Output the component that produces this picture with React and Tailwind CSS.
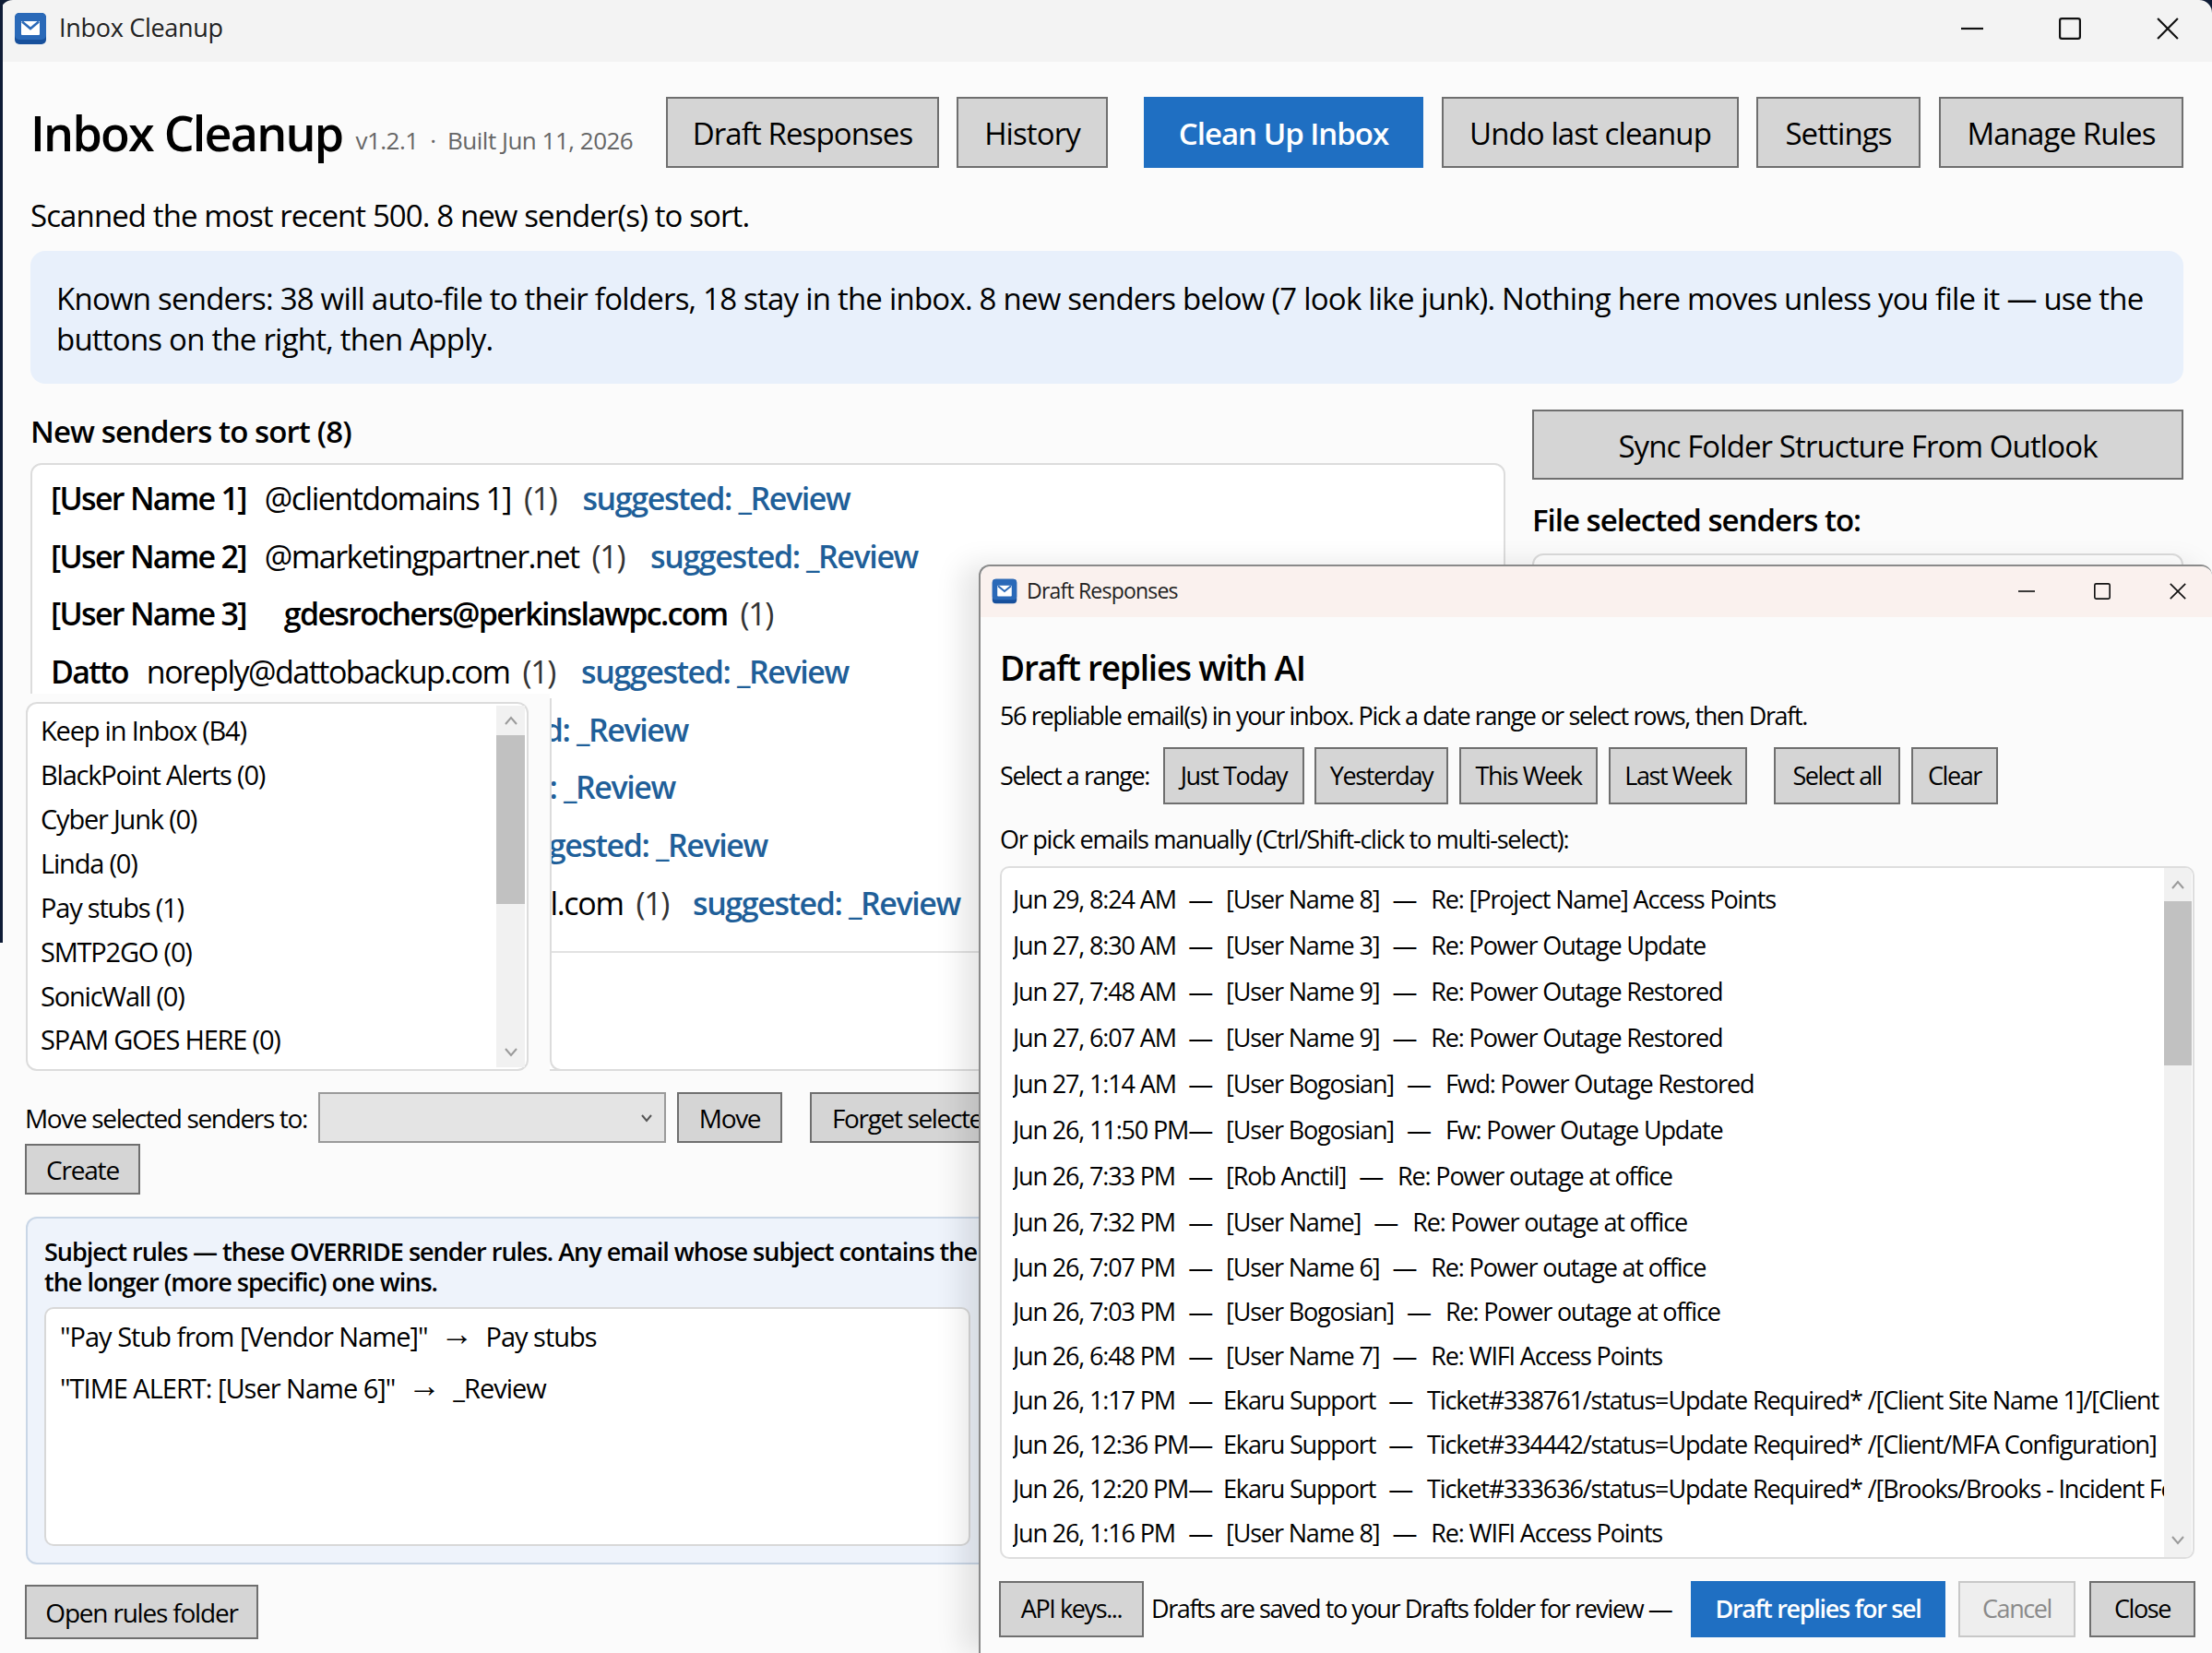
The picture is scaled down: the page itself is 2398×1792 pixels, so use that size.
import React from "react";

const FONT = "font-['Open_Sans','Noto_Sans',sans-serif]";

const senders = [
  { name: "[User Name 1]", addr: "@clientdomains 1]", note: true },
  { name: "[User Name 2]", addr: "@marketingpartner.net", note: true },
  { name: "[User Name 3]", addr: "gdesrochers@perkinslawpc.com", strong: true },
  { name: "Datto", addr: "noreply@dattobackup.com", note: true, bold: true },
];

const folders = [
  "Keep in Inbox (B4)", "BlackPoint Alerts (0)", "Cyber Junk (0)", "Linda (0)",
  "Pay stubs (1)", "SMTP2GO (0)", "SonicWall (0)", "SPAM GOES HERE (0)",
];

const emails = [
  ["Jun 29, 8:24 AM", "[User Name 8]", "Re: [Project Name] Access Points"],
  ["Jun 27, 8:30 AM", "[User Name 3]", "Re: Power Outage Update"],
  ["Jun 27, 7:48 AM", "[User Name 9]", "Re: Power Outage Restored"],
  ["Jun 27, 6:07 AM", "[User Name 9]", "Re: Power Outage Restored"],
  ["Jun 27, 1:14 AM", "[User Bogosian]", "Fwd: Power Outage Restored"],
  ["Jun 26, 11:50 PM", "[User Bogosian]", "Fw: Power Outage Update"],
  ["Jun 26, 7:33 PM", "[Rob Anctil]", "Re: Power outage at office"],
  ["Jun 26, 7:32 PM", "[User Name]", "Re: Power outage at office"],
  ["Jun 26, 7:07 PM", "[User Name 6]", "Re: Power outage at office"],
  ["Jun 26, 7:03 PM", "[User Bogosian]", "Re: Power outage at office"],
  ["Jun 26, 6:48 PM", "[User Name 7]", "Re: WIFI Access Points"],
  ["Jun 26, 1:17 PM", "Ekaru Support", "Ticket#338761/status=Update Required* /[Client Site Name 1]/[Client Site Name 2]"],
  ["Jun 26, 12:36 PM", "Ekaru Support", "Ticket#334442/status=Update Required* /[Client/MFA Configuration]"],
  ["Jun 26, 12:20 PM", "Ekaru Support", "Ticket#333636/status=Update Required* /[Brooks/Brooks - Incident Follow-up]"],
  ["Jun 26, 1:16 PM", "[User Name 8]", "Re: WIFI Access Points"],
];

function Btn({ className = "", children }) {
  return (
    <button className={"shrink-0 flex items-center justify-center border-2 border-[#6f6f6f] bg-[#d5d5d5] text-black whitespace-nowrap overflow-hidden " + className}>
      {children}
    </button>
  );
}

function BlueBtn({ className = "", children }) {
  return (
    <button className={"shrink-0 flex items-center justify-center bg-[#1f6fc2] text-white font-semibold whitespace-nowrap overflow-hidden " + className}>
      {children}
    </button>
  );
}

function AppIcon({ className = "" }) {
  return (
    <svg viewBox="0 0 36 36" className={className}>
      <rect x="1" y="1" width="34" height="34" rx="5" fill="#17509c" />
      <rect x="1" y="1" width="34" height="29" rx="5" fill="#2a69b8" />
      <rect x="8" y="10" width="20" height="15" rx="1" fill="#fff" />
      <path d="M9 10.5l9 7.5 9-7.5" fill="none" stroke="#2a69b8" strokeWidth="2.5" />
    </svg>
  );
}

function WinControls({ className = "", gap = "gap-[82px]", size = 24 }) {
  return (
    <div className={"flex items-center " + gap + " " + className}>
      <svg width={size} height={size} viewBox="0 0 22 22"><path d="M0 11h22" stroke="#111" strokeWidth="2" /></svg>
      <svg width={size} height={size} viewBox="0 0 22 22"><rect x="1" y="1" width="20" height="20" rx="2" fill="none" stroke="#111" strokeWidth="2" /></svg>
      <svg width={size} height={size} viewBox="0 0 22 22"><path d="M1 1l20 20M21 1L1 21" stroke="#111" strokeWidth="2" /></svg>
    </div>
  );
}

function ScrollTrack({ className = "", thumb = "", arrowGap = "my-[12px]", arrowGapEnd = "mb-[12px]" }) {
  return (
    <div className={"absolute flex flex-col items-center bg-[#f1f1f1] " + className}>
      <svg width="16" height="12" viewBox="0 0 16 12" className={arrowGap}><path d="M2 10l6-7 6 7" fill="none" stroke="#9a9a9a" strokeWidth="2" /></svg>
      <div className={"w-full bg-[#c1c1c1] " + thumb} />
      <svg width="16" height="12" viewBox="0 0 16 12" className={"mt-auto " + arrowGapEnd}><path d="M2 2l6 7 6-7" fill="none" stroke="#9a9a9a" strokeWidth="2" /></svg>
    </div>
  );
}

function DraftDialog() {
  return (
    <div className="absolute left-[1061px] top-[612px] w-[1337px] h-[1180px] bg-[#fbfbfb] border-l-2 border-t-2 border-[#8a8a8a] rounded-t-[12px] shadow-[-18px_0_30px_rgba(0,0,0,0.10)]">
      <div className="h-[55px] flex items-center bg-[#faf1ee] rounded-t-[12px] pl-[12px] pb-[2px]">
        <AppIcon className="w-[28px] h-[28px]" />
        <span className="ml-[10px] text-[23px] tracking-[-0.8px] text-[#222]">Draft Responses</span>
        <WinControls className="ml-auto mr-[28px]" gap="gap-[64px]" size={18} />
      </div>
      <div className="pl-[21px]">
        <h2 className="mt-[30px] text-[37px] leading-[50px] font-semibold tracking-[-1.2px]">Draft replies with AI</h2>
        <p className="mt-[7px] text-[27px] leading-[40px] tracking-[-1.35px]">56 repliable email(s) in your inbox. Pick a date range or select rows, then Draft.</p>
        <div className="mt-[14px] flex items-center h-[62px] text-[27px] tracking-[-1.4px]">
          <span className="w-[177px] whitespace-nowrap">Select a range:</span>
          <Btn className="w-[153px] h-full">Just Today</Btn>
          <Btn className="w-[145px] h-full ml-[11px]">Yesterday</Btn>
          <Btn className="w-[150px] h-full ml-[12px]">This Week</Btn>
          <Btn className="w-[150px] h-full ml-[12px]">Last Week</Btn>
          <Btn className="w-[137px] h-full ml-[29px]">Select all</Btn>
          <Btn className="w-[94px] h-full ml-[12px]">Clear</Btn>
        </div>
        <p className="mt-[18px] text-[27px] leading-[40px] tracking-[-1.25px]">Or pick emails manually (Ctrl/Shift-click to multi-select):</p>
        <div className="relative mt-[9px] w-[1295px] h-[751px] bg-white border-2 border-[#dedede] rounded-[10px] pl-[12px] pt-[9px] overflow-hidden">
          {emails.map((m, i) => (
            <div key={i} className={(i < 8 ? "h-[50px]" : "h-[48px]") + " w-[1248px] flex items-center overflow-hidden whitespace-nowrap text-[27px] tracking-[-1.15px]"}>
              <div className="w-[231px] shrink-0 flex items-center">
                <span>{m[0]}</span>
                <span className="ml-auto mr-[15px]">—</span>
              </div>
              <span className={m[1] === "Ekaru Support" ? "-ml-[3px]" : ""}>{m[1]}</span>
              <span className="ml-[14px] mr-[16px]">—</span>
              <span>{m[2]}</span>
            </div>
          ))}
          <ScrollTrack className="top-0 bottom-0 right-[1px] w-[30px]" thumb="h-[178px]" />
        </div>
        <div className="-ml-[1px] mt-[24px] flex items-center h-[61px] text-[27px] tracking-[-1.4px]">
          <Btn className="w-[157px] h-full">API keys...</Btn>
          <span className="ml-[8px] w-[585px] shrink-0 whitespace-nowrap">Drafts are saved to your Drafts folder for review —</span>
          <BlueBtn className="w-[276px] h-full tracking-[-1.3px]">Draft replies for sel</BlueBtn>
          <button className="shrink-0 ml-[14px] w-[127px] h-full border-2 border-[#c8c8c8] bg-[#eeeeee] text-[#8a8a8a]">Cancel</button>
          <Btn className="ml-[15px] w-[115px] h-full">Close</Btn>
        </div>
      </div>
    </div>
  );
}

export default function App() {
  return (
    <div className={"relative w-[2398px] h-[1792px] overflow-hidden bg-[#fbfbfb] text-black " + FONT}>
      <div className="h-[67px] flex items-center bg-[#f3f3f3] pl-[15px] pb-[6px]">
        <AppIcon className="w-[36px] h-[36px]" />
        <span className="ml-[13px] text-[27px] tracking-[-0.3px] text-[#222]">Inbox Cleanup</span>
        <WinControls className="ml-auto mr-[36px]" />
      </div>

      <div className="pl-[33px] pr-[31px]">
        <div className="mt-[38px] h-[77px] flex items-center">
          <h1 className="text-[52px] font-semibold tracking-[-1.75px] whitespace-nowrap">Inbox Cleanup</h1>
          <span className="ml-[14px] mt-[17px] text-[26px] tracking-[-0.5px] text-[#666] whitespace-pre">v1.2.1  ·  Built Jun 11, 2026</span>
          <div className="ml-auto flex h-full text-[33px] tracking-[-0.9px]">
            <Btn className="w-[296px] h-full pt-[2px]">Draft Responses</Btn>
            <Btn className="w-[164px] h-full ml-[19px] pt-[2px]">History</Btn>
            <BlueBtn className="w-[303px] h-full ml-[39px] pt-[2px] tracking-[-1px]">Clean Up Inbox</BlueBtn>
            <Btn className="w-[322px] h-full ml-[20px] pt-[2px]">Undo last cleanup</Btn>
            <Btn className="w-[178px] h-full ml-[19px] pt-[2px]">Settings</Btn>
            <Btn className="w-[265px] h-full ml-[20px] pt-[2px]">Manage Rules</Btn>
          </div>
        </div>

        <p className="mt-[30px] text-[33px] leading-[44px] tracking-[-0.9px]">Scanned the most recent 500. 8 new sender(s) to sort.</p>

        <div className="mt-[16px] h-[144px] rounded-[16px] bg-[#e8f0fb] px-[28px] pt-[30px] text-[33px] leading-[44px] tracking-[-0.78px]">
          Known senders: 38 will auto-file to their folders, 18 stay in the inbox. 8 new senders below (7 look like junk). Nothing here moves unless you file it — use the buttons on the right, then Apply.
        </div>

        <div className="mt-[28px] flex gap-[29px]">
          <div className="w-[1599px]">
            <h3 className="h-[58px] leading-[48px] text-[33px] font-semibold tracking-[-0.9px]">New senders to sort (8)</h3>
            <div className="h-[659px] bg-white border-2 border-[#dcdcdc] rounded-[12px] text-[34px] tracking-[-1.35px]">
              <div className="h-[529px] border-b-2 border-[#e2e2e2] pl-[20px] pt-[5px] whitespace-nowrap">
                {senders.map((s) => (
                  <div key={s.name} className="h-[62.7px] flex items-center">
                    <span className="font-semibold tracking-[-1.7px]">{s.name}</span>
                    <span className={s.strong ? "ml-[41px] font-semibold tracking-[-1.7px]" : "ml-[20px] tracking-[-1.5px]"}>{s.addr}</span>
                    <span className="ml-[14px] text-[#333]">(1)</span>
                    {s.note && <span className="ml-[28px] font-semibold tracking-[-1.4px] text-[#1f5f99]">suggested: _Review</span>}
                  </div>
                ))}
                <div className="h-[62.7px] flex items-center">
                  <span className="ml-[401px] font-semibold tracking-[-1.4px] text-[#1f5f99]">suggested: _Review</span>
                </div>
                <div className="h-[62.7px] flex items-center">
                  <span className="ml-[387px] font-semibold tracking-[-1.4px] text-[#1f5f99]">suggested: _Review</span>
                </div>
                <div className="h-[62.7px] flex items-center">
                  <span className="ml-[487px] font-semibold tracking-[-1.4px] text-[#1f5f99]">suggested: _Review</span>
                </div>
                <div className="h-[62.7px] flex items-center">
                  <span className="w-[670px] text-right">mail.com<span className="ml-[14px] text-[#333]">(1)</span></span>
                  <span className="ml-[26px] font-semibold tracking-[-1.4px] text-[#1f5f99]">suggested: _Review</span>
                </div>
              </div>
            </div>
          </div>
          <div className="w-[706px]">
            <Btn className="w-full h-[76px] pt-[4px] text-[33px] tracking-[-0.9px]">Sync Folder Structure From Outlook</Btn>
            <h3 className="mt-[26px] h-[36px] leading-[36px] text-[33px] font-semibold tracking-[-1px]">File selected senders to:</h3>
            <div className="mt-[18px] h-[400px] bg-white border-2 border-[#dcdcdc] rounded-[12px]" />
          </div>
        </div>
      </div>

      {/* window edge of the desktop behind the app */}
      <div className="absolute left-0 top-0 w-[3px] h-[1022px] bg-[#0f1c36]" />
      <svg width="14" height="14" viewBox="0 0 14 14" className="absolute left-0 top-0"><path d="M0 0h14a14 14 0 0 0-14 14z" fill="#0f1c36" /></svg>
      <svg width="14" height="14" viewBox="0 0 14 14" className="absolute right-0 top-0"><path d="M14 0H0a14 14 0 0 1 14 14z" fill="#0f1c36" /></svg>

      {/* folder dropdown sits on top of the senders box */}
      <div className="absolute left-[3px] top-[752px] w-[593px] h-[420px] bg-[#fbfbfb] pl-[25px] pt-[9px]">
        <div className="relative w-[545px] h-[400px] bg-white border-2 border-[#dcdcdc] rounded-[12px] pl-[14px] pt-[5px] text-[29px] tracking-[-1.2px]">
          {folders.map((f) => (
            <div key={f} className="h-[47.9px] flex items-center">{f}</div>
          ))}
          <ScrollTrack className="top-[2px] bottom-[2px] right-[2px] w-[31px]" thumb="h-[183px]" arrowGap="my-[10px]" arrowGapEnd="mb-[10px]" />
        </div>
      </div>
      <div className="absolute left-[596px] top-[757px] w-[14px] h-[404px] border-l-2 border-b-2 border-[#dcdcdc] rounded-bl-[12px]" />

      <div className="absolute left-[27px] top-[1184px] flex items-center h-[55px] text-[28px] tracking-[-1.35px]">
        <span className="w-[318px] pt-[1px] whitespace-nowrap">Move selected senders to:</span>
        <div className="w-[377px] h-full border-2 border-[#9a9a9a] bg-[#e4e4e4] flex items-center justify-end pr-[12px]">
          <svg width="14" height="10" viewBox="0 0 14 10"><path d="M2 2l5 6 5-6" fill="none" stroke="#555" strokeWidth="2" /></svg>
        </div>
        <Btn className="ml-[12px] w-[114px] h-full">Move</Btn>
        <Btn className="ml-[30px] w-[300px] h-full justify-start pl-[22px]">Forget selected</Btn>
      </div>
      <Btn className="absolute left-[27px] top-[1240px] w-[125px] h-[55px] text-[28px] tracking-[-1.2px]">Create</Btn>

      <div className="absolute left-[28px] top-[1319px] w-[1100px] h-[377px] bg-[#eef3fb] border-2 border-[#c9d6e6] rounded-[12px] pl-[18px] pt-[19px]">
        <p className="text-[27px] leading-[33px] font-semibold tracking-[-1px] w-[1200px]">Subject rules — these OVERRIDE sender rules. Any email whose subject contains the<br />the longer (more specific) one wins.</p>
        <div className="mt-[11px] w-[1004px] h-[259px] bg-white border-2 border-[#d8d8d8] rounded-[10px] pl-[15px] pt-[2px] text-[29px] tracking-[-1px]">
          <div className="h-[56px] flex items-center whitespace-pre">
            {'"Pay Stub from [Vendor Name]"'}
            <span className="mx-[14px] -translate-y-[4px] text-[36px] leading-none">→</span>
            Pay stubs
          </div>
          <div className="h-[56px] flex items-center whitespace-pre">
            {'"TIME ALERT: [User Name 6]"'}
            <span className="mx-[14px] -translate-y-[4px] text-[36px] leading-none">→</span>
            _Review
          </div>
        </div>
      </div>

      <Btn className="absolute left-[27px] top-[1718px] w-[253px] h-[59px] text-[28px] tracking-[-1.2px]">Open rules folder</Btn>

      <DraftDialog />
    </div>
  );
}
